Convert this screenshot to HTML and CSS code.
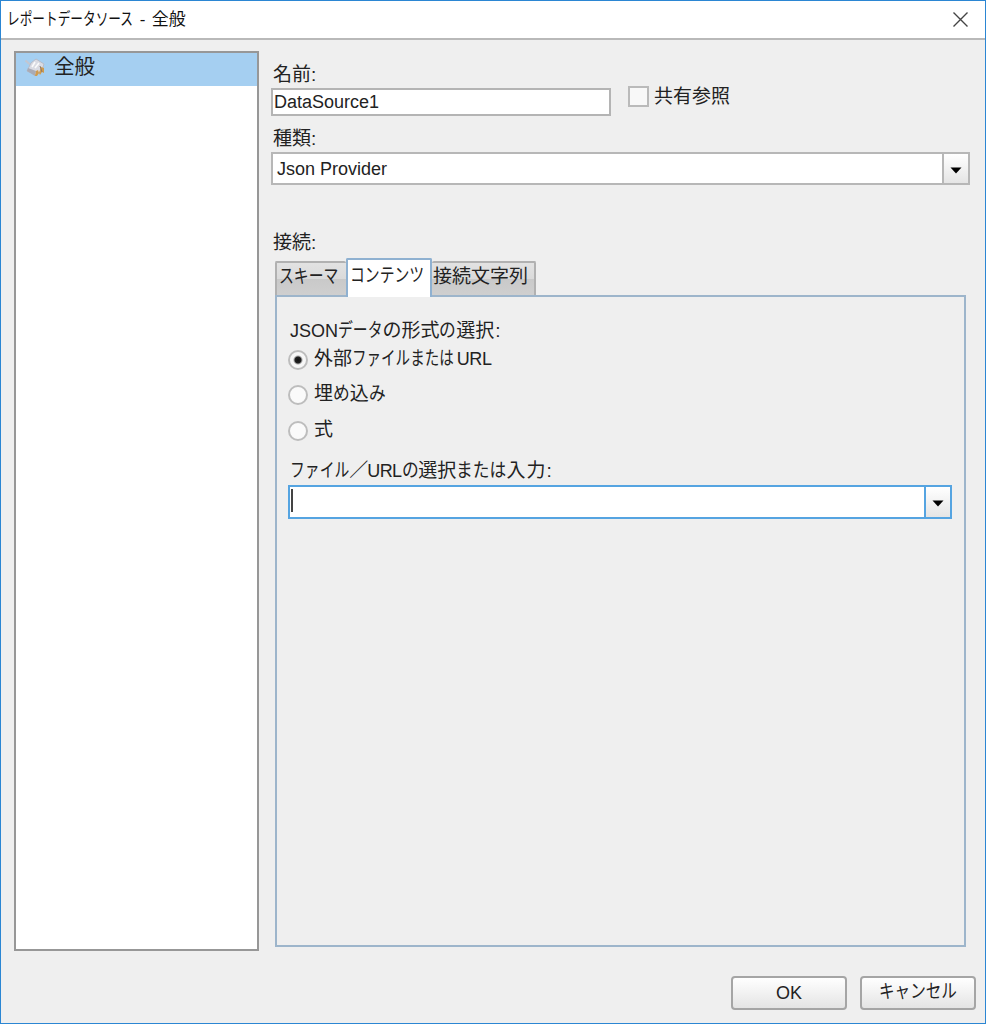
FILE: index.html
```html
<!DOCTYPE html>
<html lang="ja">
<head>
<meta charset="utf-8">
<title>レポートデータソース - 全般</title>
<link rel="stylesheet" href="styles.css">
</head>
<body>
<div class="dialog">
  <header class="titlebar">
    <div class="title"><span class="kana k10">レポートデータソース</span><span class="dash">-</span>全般</div>
    <svg class="close" width="17" height="17" viewBox="0 0 17 17"><path d="M1.5 1.5l14 14M15.500 1.500l-14 14" stroke="#444" stroke-width="1.400" fill="none"/></svg>
  </header>
  <div class="body">
    <nav class="sidebar">
      <div class="nav-item">
        <svg class="nav-icon" width="21" height="20" viewBox="0 0 21 20">
          <path d="M.5 2.500l4.500 4" stroke="#c3c6d0" stroke-width="2"/>
          <path d="M2 13l4-8 5-4 8 5-2 6-6 5z" fill="#d9dbe3" stroke="#b5b5bf" stroke-width=".8"/>
          <path d="M7 9l3-5M10 10l4-5" stroke="#fafafa" stroke-width="1.600"/>
          <path d="M2 13l8 5 1-5-8-3z" fill="#a9abb6"/>
          <path d="M10 18l1-5 2-1 1 3 2-6 3 1v5l-2-1-2 3-1-2-2 3z" fill="#cf9b4f"/>
          <path d="M15 8l2 6" stroke="#8d7a6a" stroke-width="1"/>
        </svg>
        <span>全般</span>
      </div>
    </nav>
    <main class="content">
      <div class="name-row">
        <div class="name-field">
          <label class="label">名前:</label>
          <div class="textbox">DataSource1</div>
        </div>
        <div class="check"><i class="checkbox"></i><span>共有参照</span></div>
      </div>
      <label class="label type-label">種類:</label>
      <div class="combo">
        <div class="combo-text">Json Provider</div>
        <div class="combo-button"><svg width="12" height="7" viewBox="0 0 12 7"><path d="M.5.500h11L6 6.500z"/></svg></div>
      </div>
      <label class="label conn-label">接続:</label>
      <div class="tabs">
        <div class="tab tab-schema"><span class="kana k4">スキーマ</span></div>
        <div class="tab tab-active"><span class="kana k5">コンテンツ</span></div>
        <div class="tab tab-string">接続文字列</div>
      </div>
      <section class="panel">
        <div class="line format-title"><span class="latin">JSON</span><span class="kana k3">データ</span><span class="kana k1 full">の</span>形式<span class="kana k1 wide">の</span>選択<span class="colon">:</span></div>
        <div class="radio"><i class="dot selected"></i><div class="line">外部<span class="kana k7 tight">ファイルまたは</span><span class="latin url">URL</span></div></div>
        <div class="radio"><i class="dot"></i><div class="line">埋<span class="kana k1 wide">め</span>込<span class="kana k1 wide">み</span></div></div>
        <div class="radio"><i class="dot"></i><div class="line">式</div></div>
        <div class="line file-title"><span class="kana k4">ファイル</span><span class="slash">／</span><span class="latin">URL</span><span class="kana k1 wide">の</span>選択<span class="kana k3 wide">または</span><span class="enter">入力</span>:</div>
        <div class="combo focused">
          <div class="combo-text"><i class="caret"></i></div>
          <div class="combo-button"><svg width="12" height="7" viewBox="0 0 12 7"><path d="M.5.500h11L6 6.500z"/></svg></div>
        </div>
      </section>
    </main>
  </div>
  <footer class="actions">
    <div class="button ok">OK</div>
    <div class="button"><span class="kana k5 cancel">キャンセル</span></div>
  </footer>
</div>
</body>
</html>
```

FILE: styles.css
```css
* { box-sizing: border-box; }
body {
  margin: 0;
  font-family: "Liberation Sans", "Noto Sans CJK JP", sans-serif;
  font-size: 19px;
  line-height: 24px;
  color: #222;
  font-weight: 400;
}
.dialog {
  width: 986px;
  height: 1024px;
  display: flex;
  flex-direction: column;
  background: #efefef;
  border: 1px solid #2b86d3;
  overflow: hidden;
  white-space: nowrap;
}
.titlebar {
  height: 39px;
  flex: none;
  display: flex;
  justify-content: space-between;
  background: #fff;
  border-bottom: 2px solid #b9b9b9;
  padding: 0 16px 0 6px;
}
.title { font-size: 17px; line-height: 37px; color: #111; }
.close { margin-top: 10px; }
.dash { display: inline-block; width: 18px; text-align: center; }

/* Kana are set narrower than kanji */
.kana {
  --ratio: .78;
  display: inline-block;
  width: calc(var(--n) * var(--ratio) * 1em);
  transform: scaleX(var(--ratio));
  transform-origin: left;
}
.k1 { --n: 1; }
.k3 { --n: 3; }
.k4 { --n: 4; }
.k5 { --n: 5; }
.k7 { --n: 7; }
.k10 { --n: 10; }
.title .kana { --ratio: .745; }
.wide { --ratio: .88; }
.full { --ratio: 1; }
.tight { --ratio: .765; }
.cancel { --ratio: .82; }

.body {
  height: 912px;
  flex: none;
  display: flex;
  padding: 11px 15px 0 13px;
}
.sidebar {
  width: 245px;
  height: 900px;
  background: #fff;
  border: 2px solid #979797;
}
.nav-item {
  height: 33px;
  display: flex;
  background: #a5cff1;
  padding-left: 9px;
  font-size: 20.5px;
  line-height: 27px;
}
.nav-icon { margin: 5px 8px 0 0; }
.content { width: 699px; margin-left: 12px; padding-top: 12px; }
.label { display: block; height: 25px; padding-left: 2px; }
.name-row { display: flex; height: 53px; }
.textbox {
  width: 340px;
  height: 28px;
  border: 2px solid #b4b4b4;
  background: #fff;
  padding-left: 1px;
  font-size: 18px;
}
.check { display: flex; margin: 23px 0 0 17px; height: 22px; gap: 5px; }
.checkbox {
  width: 21px;
  height: 21px;
  border: 2px solid #bababa;
  background: #f8f8f8;
}
.check span { line-height: 22px; }
.type-label { margin-top: 11px; }
.combo {
  height: 33px;
  display: flex;
  border: 2px solid #b7b7b7;
  background: #fff;
}
.combo-text { flex: 1; padding-left: 4px; font-size: 18px; line-height: 31px; }
.combo-button {
  width: 26px;
  border-left: 2px solid #b7b7b7;
  background: linear-gradient(#fff, #e5e5e5);
  display: grid;
  place-items: center;
}
.combo-button svg { margin-top: 3px; }
.conn-label { margin-top: 45px; padding-top: 1px; height: 27px; }
.tabs { display: flex; align-items: flex-end; height: 38px; margin-left: 4px; }
.tab {
  height: 34px;
  border: 2px solid #b1b1b1;
  border-bottom: 0;
  border-radius: 2px 2px 0 0;
  background: linear-gradient(#e2e2e2 0, #dadada 49%, #c9c9c9 50%, #cfcfcf);
  line-height: 27px;
  padding-left: 2px;
}
.tab-schema { width: 71px; border-right: 0; }
.tab-active {
  width: 86px;
  height: 39px;
  margin-bottom: -2px;
  border-color: #8fb1d1;
  background: #fff;
  line-height: 31px;
  position: relative;
}
.tab-string { width: 104px; border-left: 0; padding-left: 1px; }
.panel {
  width: 691px;
  height: 652px;
  margin-left: 4px;
  border: 2px solid #9db5cb;
  padding: 22px 12px 0 11px;
}
.latin { font-size: 18px; }
.format-title { padding-left: 2px; height: 28px; }
.colon { margin-left: 1px; }
.radio { display: flex; height: 35px; gap: 6px; }
.radio:nth-child(3) { height: 36px; }
.dot {
  width: 20px;
  height: 20px;
  margin-top: 3px;
  border: 2px solid #bdbdbd;
  border-radius: 50%;
  background: #fafafa;
}
.selected { background: radial-gradient(circle, #111 0, #222 3px, #aaa 4px, #f7f7f7 5px); }
.url { margin-left: 3px; letter-spacing: -.4px; }
.file-title { height: 26px; padding-left: 2px; margin-top: 6px; }
.slash { margin-right: -1px; }
.file-title .latin { letter-spacing: -.6px; }
.enter { letter-spacing: 1px; }
.focused { height: 34px; border-color: #55a4e1; }
.focused .combo-text { padding: 2px 0 0 1px; }
.focused .combo-button { border-color: #55a4e1; }
.caret { display: block; width: 2px; height: 23px; background: #444; }
.actions { display: flex; justify-content: flex-end; gap: 13px; padding: 24px 9px 0 0; }
.button {
  width: 116px;
  height: 34px;
  border: 2px solid #a5a5a5;
  border-radius: 4px;
  background: linear-gradient(#fff, #e4e4e4);
  text-align: center;
  line-height: 27px;
}
.ok { font-size: 18px; line-height: 31px; }
```
